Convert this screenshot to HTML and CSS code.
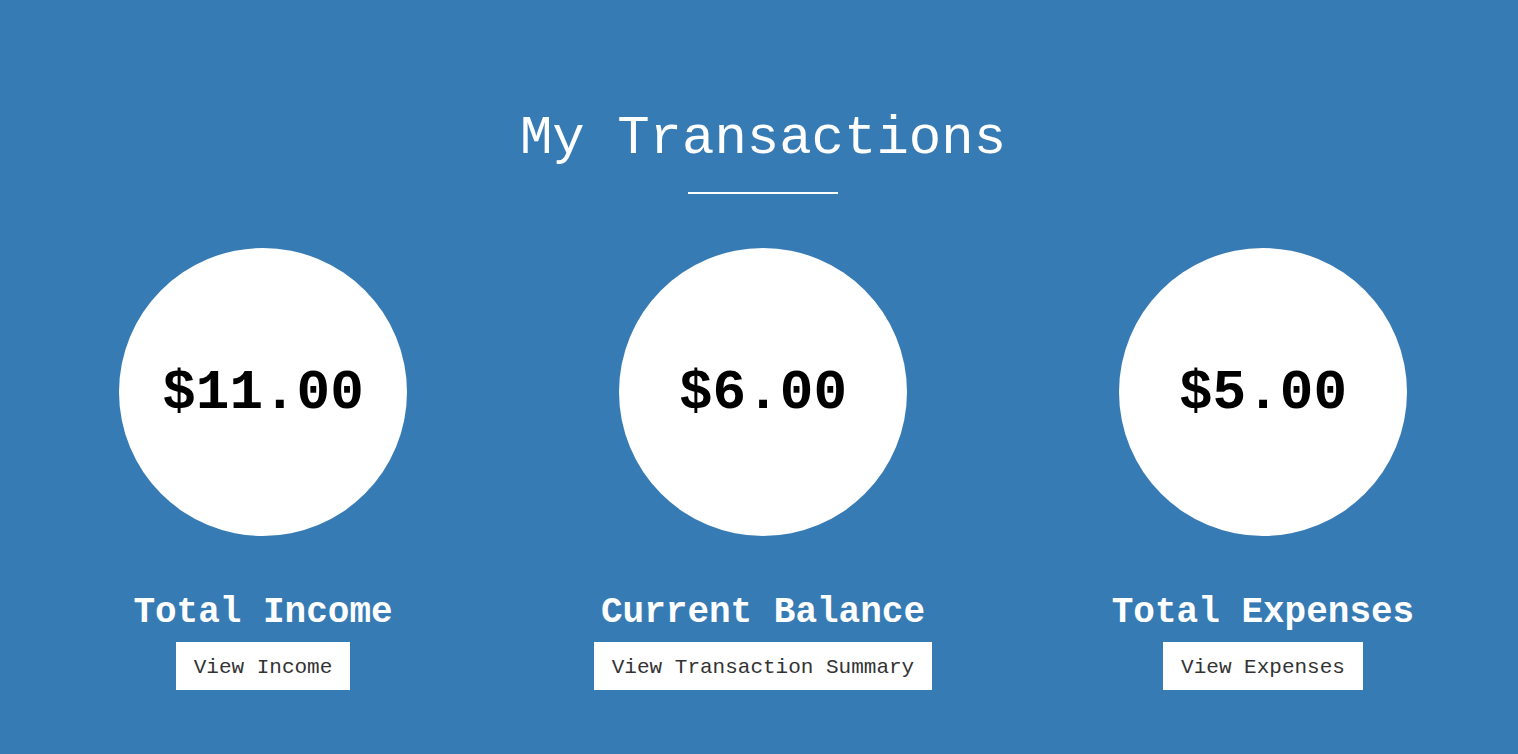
FILE: index.html
```html
<!DOCTYPE html>
<html>
<head>
<meta charset="utf-8">
<link rel="stylesheet" href="styles.css">
</head>
<body>
<div class="page">
  <header class="header">
    <h1 class="title">My Transactions</h1>
    <div class="rule"></div>
  </header>
  <div class="row">
    <div class="col">
      <div class="circle"><span class="amount">$11.00</span></div>
      <h2 class="label">Total Income</h2>
      <a class="btn" href="#">View Income</a>
    </div>
    <div class="col">
      <div class="circle"><span class="amount">$6.00</span></div>
      <h2 class="label">Current Balance</h2>
      <a class="btn" href="#">View Transaction Summary</a>
    </div>
    <div class="col">
      <div class="circle"><span class="amount">$5.00</span></div>
      <h2 class="label">Total Expenses</h2>
      <a class="btn" href="#">View Expenses</a>
    </div>
  </div>
</div>
</body>
</html>
```
FILE: styles.css
```css
html, body {
  margin: 0;
  padding: 0;
  background: #377bb5;
  height: 100%;
}
body {
  font-family: "Liberation Mono", "Courier New", monospace;
  color: #fff;
}
.page {
  width: 1500px;
  margin-left: 13px;
}
.header {
  display: flex;
  flex-direction: column;
  align-items: center;
  padding-top: 112px;
}
.title {
  margin: 0;
  font-size: 54px;
  line-height: 54px;
  font-weight: normal;
}
.rule {
  width: 150px;
  height: 2px;
  background: #fff;
  margin-top: 26px;
}
.row {
  display: flex;
  margin-top: 54px;
}
.col {
  width: 500px;
  display: flex;
  flex-direction: column;
  align-items: center;
}
.circle {
  width: 288px;
  height: 288px;
  border-radius: 50%;
  background: #fff;
  display: flex;
  align-items: center;
  justify-content: center;
}
.amount {
  color: #000;
  font-weight: bold;
  font-size: 56px;
  line-height: 1;
  padding-top: 2px;
}
.label {
  margin: 58px 0 0 0;
  font-size: 36px;
  line-height: 37px;
  font-weight: bold;
}
.btn {
  margin-top: 11px;
  display: block;
  background: #fff;
  color: #333;
  text-decoration: none;
  font-size: 21px;
  height: 45px;
  line-height: 45px;
  padding: 3px 18px 0;
}
```
